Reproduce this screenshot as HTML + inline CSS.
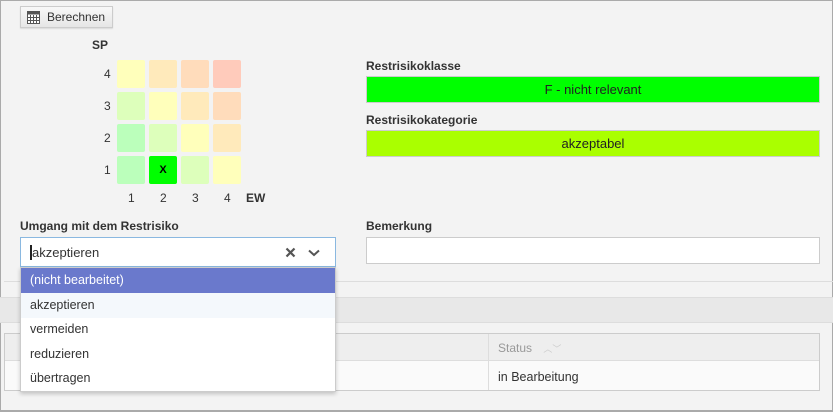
<!DOCTYPE html>
<html><head><style>
*{box-sizing:border-box;margin:0;padding:0}
body{width:833px;height:412px;background:#f3f3f3;font-family:"Liberation Sans",sans-serif;font-size:12px;color:#333;position:relative;overflow:hidden}
.abs{position:absolute}
.frame{left:0;top:0;width:833px;height:412px;border:1px solid #aaa;border-bottom:2px solid #aaa}
.btn{left:20px;top:6px;width:93px;height:22px;border:1px solid #ccc;background:linear-gradient(#f8f8f8,#e6e6e6);font-size:12px;color:#333;padding:3px 0 0 26px;box-shadow:0 1px 1px rgba(0,0,0,.1)}
.cell{width:28px;height:28px;border-radius:2px;position:absolute}
.lbl{font-weight:bold;color:#333;font-size:12px}
.box{left:366px;width:454px;height:27px;border:1px solid #ccc;text-align:center;line-height:25px;font-size:13px;color:#222}
.num{font-size:12px;color:#333}
.item{position:absolute;left:0;width:100%;height:25px;line-height:24px;padding-left:9px;font-size:12.5px;color:#333}
</style></head><body>
<div class="abs frame"></div>
<div class="abs" style="left:4px;top:281px;width:829px;height:1px;background:#ddd"></div>
<div class="abs" style="left:0;top:297px;width:833px;height:26px;background:#e8e8e8;border-top:1px solid #ddd;border-bottom:1px solid #ddd"></div>
<div class="abs" style="left:4px;top:333px;width:816px;height:58px;border:1px solid #ccc;background:#fafafa"></div>
<div class="abs" style="left:5px;top:334px;width:814px;height:27px;background:#eee;border-bottom:1px solid #ddd"></div>
<div class="abs" style="left:488px;top:334px;width:1px;height:56px;background:#ddd"></div>
<div class="abs" style="left:498px;top:341px;color:#999;font-size:12px">Status <span style="font-size:9px;color:#ccc;margin-left:8px">︿﹀</span></div>
<div class="abs" style="left:498px;top:370px;font-size:12.5px">in Bearbeitung</div>

<div class="abs btn"><svg class="abs" style="left:6px;top:4px" width="13" height="13" viewBox="0 0 13 13"><rect x="0.5" y="0.5" width="12" height="12" fill="#fff" stroke="#555"/><rect x="0.5" y="0.5" width="12" height="3" fill="#555"/><path d="M0 6.5H13M0 9.5H13M3.5 4V13M6.5 4V13M9.5 4V13" stroke="#555"/></svg>Berechnen</div>

<div class="abs lbl" style="left:92px;top:38px">SP</div>
<div class="abs num" style="left:104px;top:67px">4</div>
<div class="abs num" style="left:104px;top:99px">3</div>
<div class="abs num" style="left:104px;top:131px">2</div>
<div class="abs num" style="left:104px;top:163px">1</div>
<div class="cell" style="left:117px;top:60px;background:#ffffbb"></div>
<div class="cell" style="left:149px;top:60px;background:#ffeabb"></div>
<div class="cell" style="left:181px;top:60px;background:#ffdcbb"></div>
<div class="cell" style="left:213px;top:60px;background:#ffcbbb"></div>
<div class="cell" style="left:117px;top:92px;background:#ddffbb"></div>
<div class="cell" style="left:149px;top:92px;background:#ffffbb"></div>
<div class="cell" style="left:181px;top:92px;background:#ffeabb"></div>
<div class="cell" style="left:213px;top:92px;background:#ffdcbb"></div>
<div class="cell" style="left:117px;top:124px;background:#bbffbb"></div>
<div class="cell" style="left:149px;top:124px;background:#ddffbb"></div>
<div class="cell" style="left:181px;top:124px;background:#ffffbb"></div>
<div class="cell" style="left:213px;top:124px;background:#ffeabb"></div>
<div class="cell" style="left:117px;top:156px;background:#bbffbb"></div>
<div class="cell" style="left:149px;top:156px;background:#00ff00;text-align:center;line-height:28px;font-weight:bold;font-size:11px;color:#000">X</div>
<div class="cell" style="left:181px;top:156px;background:#ddffbb"></div>
<div class="cell" style="left:213px;top:156px;background:#ffffbb"></div>
<div class="abs num" style="left:128px;top:191px">1</div>
<div class="abs num" style="left:160px;top:191px">2</div>
<div class="abs num" style="left:192px;top:191px">3</div>
<div class="abs num" style="left:224px;top:191px">4</div>
<div class="abs lbl" style="left:246px;top:191px">EW</div>

<div class="abs lbl" style="left:366px;top:59px">Restrisikoklasse</div>
<div class="abs box" style="top:76px;background:#00ff00">F - nicht relevant</div>
<div class="abs lbl" style="left:366px;top:113px">Restrisikokategorie</div>
<div class="abs box" style="top:130px;background:#aaff00">akzeptabel</div>
<div class="abs lbl" style="left:366px;top:219px">Bemerkung</div>
<div class="abs box" style="top:237px;background:#fff"></div>

<div class="abs lbl" style="left:20px;top:219px">Umgang mit dem Restrisiko</div>
<div class="abs" style="left:20px;top:237px;width:316px;height:30px;border:1px solid #8ab8e0;background:#fff;font-size:13px;padding:7px 0 0 10px;color:#333"><span style="border-left:2px solid #222;margin-left:-1px">a</span>kzeptieren
<svg class="abs" style="left:264px;top:9px" width="11" height="11" viewBox="0 0 11 11"><path d="M1.5 1.5L9.5 9.5M9.5 1.5L1.5 9.5" stroke="#555" stroke-width="2.2"/></svg>
<svg class="abs" style="left:287px;top:11px" width="12" height="8" viewBox="0 0 12 8"><path d="M1 1.5L6 6L11 1.5" stroke="#555" stroke-width="2" fill="none"/></svg></div>
<div class="abs" style="left:20px;top:267px;width:316px;height:125px;background:#fff;border:1px solid #ccc;box-shadow:0 2px 4px rgba(0,0,0,.2)">
<div class="item" style="top:0;background:#6a79cc;color:#fff">(nicht bearbeitet)</div>
<div class="item" style="top:25px;background:#f4f8fc">akzeptieren</div>
<div class="item" style="top:49px">vermeiden</div>
<div class="item" style="top:74px">reduzieren</div>
<div class="item" style="top:98px">übertragen</div>
</div>
</body></html>
